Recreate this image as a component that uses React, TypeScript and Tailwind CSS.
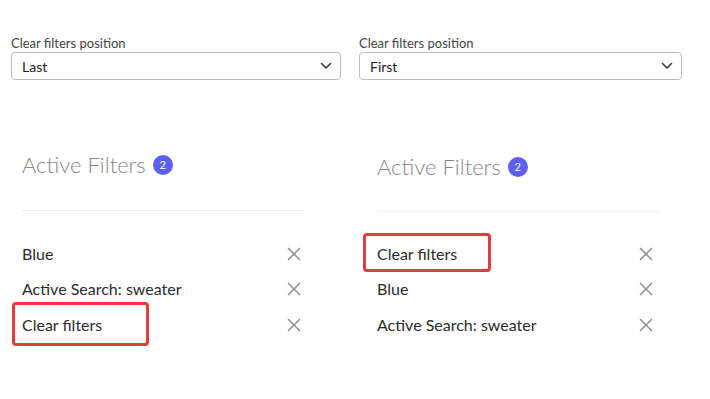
import React from "react";

type Demo = {
  value: string;
  width: string;
  inset: string;
  headingGap: string;
  listGap: string;
  items: string[];
  highlight: string;
};

const demos: Demo[] = [
  {
    value: "Last",
    width: "w-[330px]",
    inset: "pl-[11px] w-[293px] mt-[69px]",
    headingGap: "mt-[29px]",
    listGap: "mt-[25px]",
    items: ["Blue", "Active Search: sweater", "Clear filters"],
    highlight: "Clear filters",
  },
  {
    value: "First",
    width: "w-[323px]",
    inset: "pl-[18px] w-[297px] mt-[71px]",
    headingGap: "mt-[28px]",
    listGap: "mt-[24px]",
    items: ["Clear filters", "Blue", "Active Search: sweater"],
    highlight: "Clear filters",
  },
];

function Chevron() {
  return (
    <svg width="12" height="8" viewBox="0 0 12 8" fill="none">
      <path d="M1.5 1.5 6 6l4.5-4.5" stroke="#3a3a3a" strokeWidth="1.6" strokeLinecap="round" strokeLinejoin="round" />
    </svg>
  );
}

function CloseIcon() {
  return (
    <svg width="14" height="14" viewBox="0 0 14 14" fill="none">
      <path d="M1 1l12 12M13 1 1 13" stroke="#8f8f8f" strokeWidth="1.5" />
    </svg>
  );
}

function FilterColumn({ demo }: { demo: Demo }) {
  return (
    <div className={`flex flex-col ${demo.width}`}>
      <label className="text-[13px] leading-[16px] text-[#444]">Clear filters position</label>
      <div className="mt-[1px] flex h-[28px] items-center justify-between rounded-[4px] border border-[#bdbdbd] bg-white pl-[10px] pr-[8px]">
        <span className="text-[14px] text-[#222]">{demo.value}</span>
        <Chevron />
      </div>

      <div className={demo.inset}>
        <div className="flex items-center gap-[7px]">
          <h2 className="text-[22px] font-light leading-[32px] text-[#878787]">Active Filters</h2>
          <span className="flex h-[20px] w-[20px] items-center justify-center rounded-full bg-[#5c5ff2] text-[11px] text-white">
            2
          </span>
        </div>
        <div className={`${demo.headingGap} h-px w-[282px] bg-[#ececec]`} />
        <ul className={`${demo.listGap} flex flex-col`}>
          {demo.items.map((item) => (
            <li key={item} className="relative flex h-[35.5px] items-center justify-between pr-[3px]">
              <span className="text-[16px] text-[#2b2b2b]">{item}</span>
              <CloseIcon />
              {item === demo.highlight && (
                <span
                  className={
                    demo.value === "Last"
                      ? "absolute left-[-10px] top-[-5px] h-[44px] w-[137px] rounded-[4px] border-[3px] border-[#e53b3b]"
                      : "absolute left-[-14px] top-[-3px] h-[39px] w-[128px] rounded-[4px] border-[3px] border-[#e53b3b]"
                  }
                />
              )}
            </li>
          ))}
        </ul>
      </div>
    </div>
  );
}

export default function App() {
  return (
    <div className="h-[399px] w-[710px] bg-white pl-[11px] pt-[35px] font-['Lato','Liberation_Sans',sans-serif]">
      <div className="flex gap-[18px]">
        {demos.map((d) => (
          <FilterColumn key={d.value} demo={d} />
        ))}
      </div>
    </div>
  );
}
